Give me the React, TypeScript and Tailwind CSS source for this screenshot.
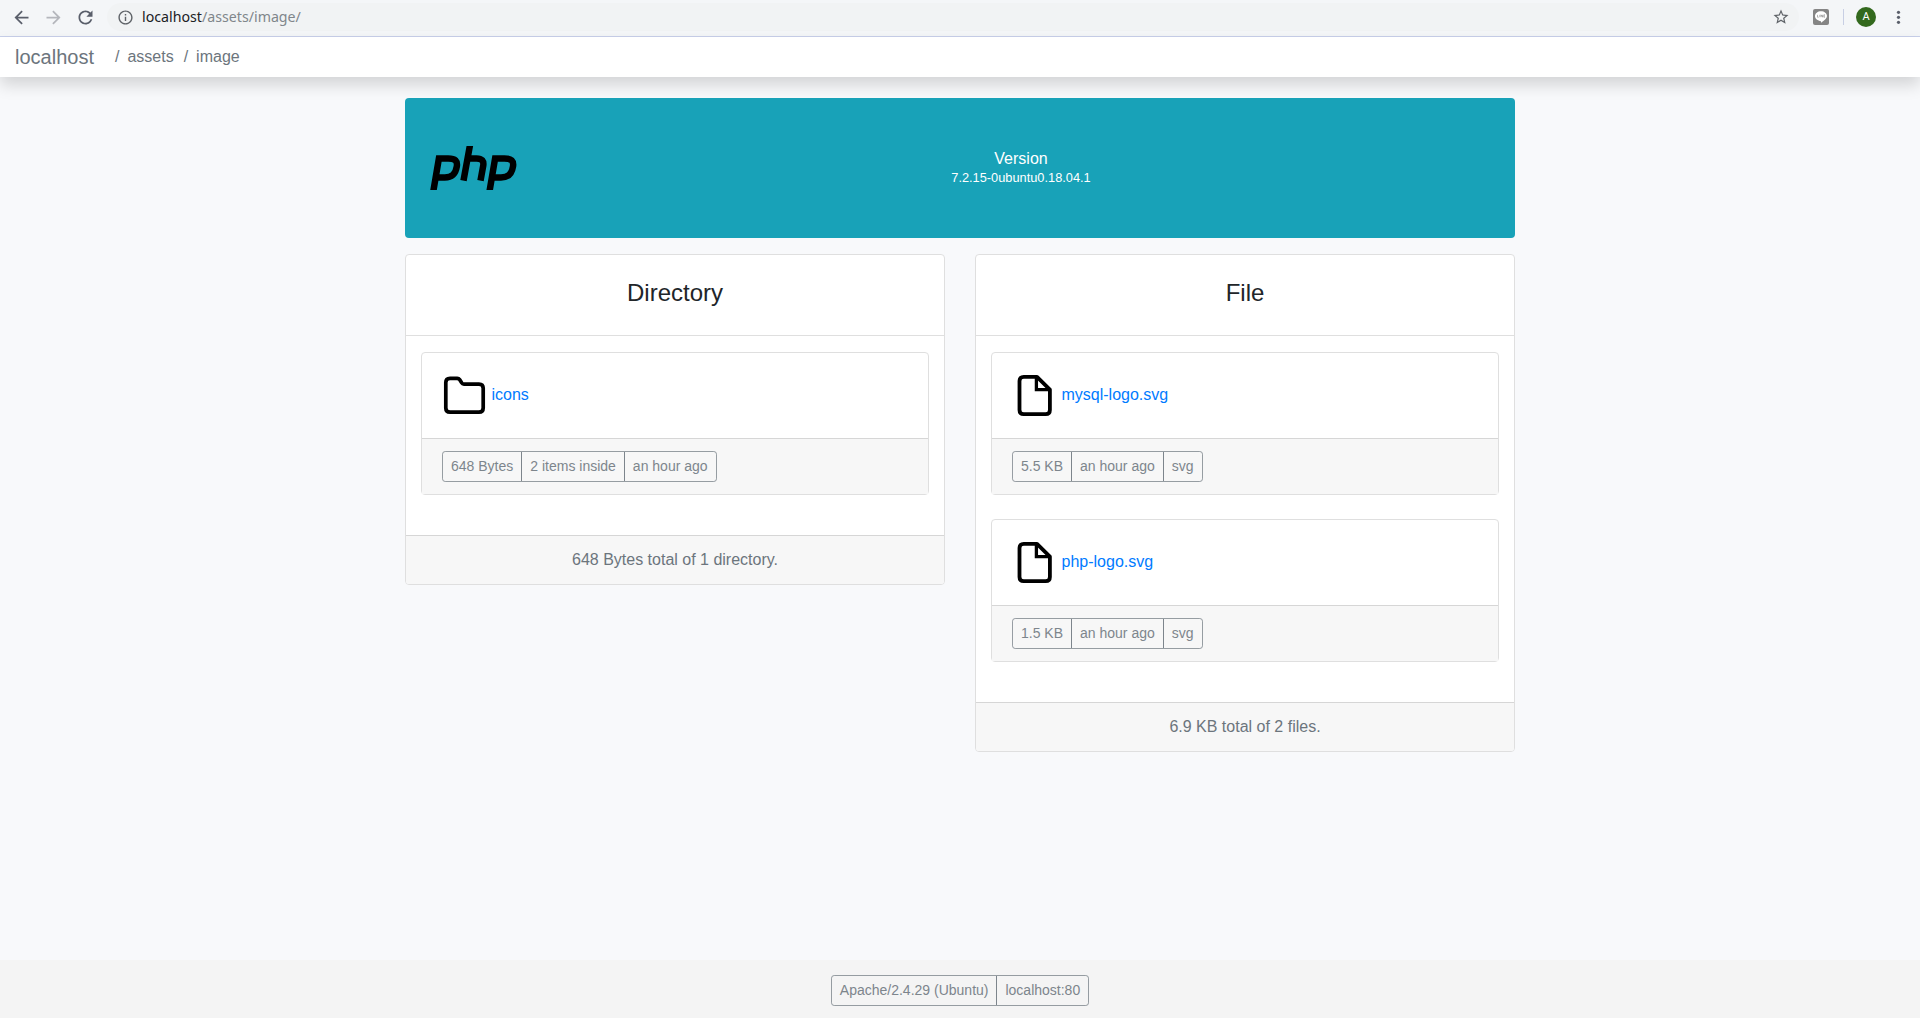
import React from "react";

function BrowserBar() {
  return (
    <div className="flex h-[37px] items-center border-b border-[#c8d0ea] bg-[#f4f6f8] pb-[2px]">
      <svg className="ml-[11px] h-[21px] w-[21px]" viewBox="0 0 24 24" fill="#5a5f6b">
        <path d="M20 11H7.83l5.59-5.59L12 4l-8 8 8 8 1.41-1.41L7.83 13H20v-2z" />
      </svg>
      <svg className="ml-[11px] h-[21px] w-[21px]" viewBox="0 0 24 24" fill="#b4b6bc">
        <path d="M12 4l-1.41 1.41L16.17 11H4v2h12.17l-5.58 5.59L12 20l8-8z" />
      </svg>
      <svg className="ml-[11px] h-[21px] w-[21px]" viewBox="0 0 24 24" fill="#5a5f6b">
        <path d="M17.65 6.35C16.2 4.9 14.21 4 12 4c-4.42 0-7.99 3.58-7.99 8s3.57 8 7.99 8c3.73 0 6.84-2.55 7.73-6h-2.08c-.82 2.33-3.04 4-5.65 4-3.31 0-6-2.69-6-6s2.69-6 6-6c1.66 0 3.14.69 4.22 1.78L13 11h7V4l-2.35 2.35z" />
      </svg>
      <div className="ml-[11px] flex h-7 w-[1692px] items-center rounded-full bg-[#f1f3f4] pl-[10px] pr-[9px]">
        <svg className="h-[17px] w-[17px]" viewBox="0 0 24 24" fill="#5f6368">
          <path d="M11 17h2v-6h-2v6zm1-15C6.48 2 2 6.48 2 12s4.48 10 10 10 10-4.48 10-10S17.52 2 12 2zm0 18c-4.41 0-8-3.59-8-8s3.59-8 8-8 8 3.59 8 8-3.59 8-8 8zM11 9h2V7h-2v2z" />
        </svg>
        <span className="ml-2 flex-1 font-['Noto_Sans',sans-serif] text-[14.2px] leading-5 text-[#80868b]">
          <span className="text-[#202124]">localhost</span>/assets/image/
        </span>
        <svg className="h-[18px] w-[18px]" viewBox="0 0 24 24" fill="#5f6368">
          <path d="M22 9.24l-7.19-.62L12 2 9.19 8.63 2 9.24l5.46 4.73L5.82 21 12 17.27 18.18 21l-1.63-7.03L22 9.24zM12 15.4l-3.76 2.27 1-4.28-3.32-2.88 4.38-.38L12 6.1l1.71 4.04 4.38.38-3.32 2.88 1 4.28L12 15.4z" />
        </svg>
      </div>
      <svg className="ml-[14px] h-4 w-4" viewBox="0 0 16 16">
        <rect width="16" height="16" rx="2" fill="#858585" />
        <path d="M8 2.2c3.3 0 6 2.1 6 4.8 0 1.1-.5 2.1-1.4 3.1-1.2 1.4-3.3 2.8-4.1 3.3-.7.3-.5-.5-.5-1.2C4.7 11.8 2 9.7 2 7c0-2.7 2.7-4.8 6-4.8z" fill="#fff" />
        <path d="M4.5 5.8v2.4h1.2M6.8 5.8v2.4M8 8.2V5.8l1.5 2.4V5.8M12 5.8h-1.2v2.4H12M10.8 7H12" fill="none" stroke="#858585" strokeWidth=".6" />
      </svg>
      <div className="ml-[14px] h-4 w-px bg-[#c8cfe4]" />
      <div className="ml-[12px] flex h-5 w-5 items-center justify-center rounded-full bg-[#33691e] font-[Roboto,sans-serif] text-[11px] text-white">A</div>
      <svg className="ml-[12px] h-5 w-5" viewBox="0 0 20 20" fill="#5a5f6b">
        <circle cx="10.5" cy="5.3" r="1.6" />
        <circle cx="10.5" cy="10.3" r="1.6" />
        <circle cx="10.5" cy="15.3" r="1.6" />
      </svg>
    </div>
  );
}

function FolderIcon() {
  return (
    <svg className="h-[45px] w-[45px]" viewBox="0 0 45 45" fill="none" stroke="#000" strokeWidth="3.7" strokeLinejoin="round">
      <path d="M3.8 9.6q0-4.2 4.2-4.2h7.3q1.5 0 2.3 1.2l1.9 3q.9 1.5 2.4 1.5H37q4.2 0 4.2 4.2V35q0 4.2-4.2 4.2H8q-4.2 0-4.2-4.2z" />
    </svg>
  );
}

function FileIcon() {
  return (
    <svg className="h-[45px] w-[45px]" viewBox="0 0 45 45" fill="none" stroke="#000" strokeWidth="3.8" strokeLinejoin="round">
      <path d="M11.7 3.8H25l12.9 12.9V37q0 4.2-4.2 4.2h-22q-4.2 0-4.2-4.2V8q0-4.2 4.2-4.2z" />
      <path d="M24.4 4v12.7h13" strokeWidth="3.3" strokeLinejoin="miter" />
    </svg>
  );
}

function Badges({ items }: { items: string[] }) {
  return (
    <div className="flex w-fit divide-x divide-[#6c757d] rounded-[3.2px] border border-[#6c757d]/80 text-[14px] leading-[21px] text-[#6c757d] opacity-[.87]">
      {items.map((t) => (
        <span key={t} className="px-2 py-1">{t}</span>
      ))}
    </div>
  );
}

function Entry({ icon, name, meta }: { icon: React.ReactNode; name: string; meta: string[] }) {
  return (
    <div className="mb-6 rounded-[4px] border border-[#dfdfdf]">
      <div className="flex h-[85px] items-center px-5">
        {icon}
        <a className="mb-[2px] ml-[4.5px] text-[16px] leading-6 text-[#007bff]">{name}</a>
      </div>
      <div className="border-t border-[#d6d6d6] bg-[#f7f7f7] px-5 py-3">
        <Badges items={meta} />
      </div>
    </div>
  );
}

function Panel({ title, total, children }: { title: string; total: string; children: React.ReactNode }) {
  return (
    <section className="rounded-[4px] border border-[#dfdfdf] bg-white">
      <h4 className="h-[81px] border-b border-[#dfdfdf] pt-6 text-center text-[24px] leading-[28.8px] text-[#212529]">{title}</h4>
      <div className="px-[15px] py-4">{children}</div>
      <div className="rounded-b-[3px] border-t border-[#d6d6d6] bg-[#f7f7f7] py-3 text-center text-[16px] leading-6 text-[#6c757d]">{total}</div>
    </section>
  );
}

export default function App() {
  return (
    <div className="flex h-[1018px] flex-col overflow-hidden bg-[#f8f9fb] font-['Liberation_Sans',Arial,sans-serif]">
      <BrowserBar />
      <nav className="flex h-10 items-center bg-white pl-[15px] text-[#6c757d] shadow-[0_8px_16px_rgba(0,0,0,0.15)]">
        <span className="text-[20px] leading-[30px]">localhost</span>
        <span className="ml-[21px] text-[16px]">/</span>
        <span className="ml-2 text-[16px]">assets</span>
        <span className="ml-[10px] text-[16px]">/</span>
        <span className="ml-2 text-[16px]">image</span>
      </nav>
      <main className="mx-auto mt-[21px] w-[1110px] flex-1">
        <header className="flex h-[140px] items-center rounded-[4px] bg-[#18a2b8] pl-[25px]">
          <svg className="h-[44px] w-[87px]" viewBox="0 0 87 44" fill="none" stroke="#000" strokeWidth="6.5">
            <path d="M3.2 46L8.9 12.4h9.3c7 0 9.500 2.500 8.600 8-1.300 8-5 11-12 11H7" />
            <path d="M40.200-2L33.500 34.700M38 12.400h8.500q8 0 6.700 7.500L50.500 34.700" />
            <path d="M59.400 46L65.100 12.400h9.300c7 0 9.500 2.500 8.600 8-1.300 8-5 11-12 11H63" />
          </svg>
          <div className="ml-[434px] w-[140px] text-center text-white">
            <div className="text-[16px] leading-[19px]">Version</div>
            <div className="whitespace-nowrap text-[12.8px] leading-[19px]">7.2.15-0ubuntu0.18.04.1</div>
          </div>
        </header>
        <div className="mt-4 grid grid-cols-2 items-start gap-[30px]">
          <Panel title="Directory" total="648 Bytes total of 1 directory.">
            <Entry icon={<FolderIcon />} name="icons" meta={["648 Bytes", "2 items inside", "an hour ago"]} />
          </Panel>
          <Panel title="File" total="6.9 KB total of 2 files.">
            <Entry icon={<FileIcon />} name="mysql-logo.svg" meta={["5.5 KB", "an hour ago", "svg"]} />
            <Entry icon={<FileIcon />} name="php-logo.svg" meta={["1.5 KB", "an hour ago", "svg"]} />
          </Panel>
        </div>
      </main>
      <footer className="flex h-[58px] items-start justify-center bg-[#f4f4f4] pt-[15px]">
        <Badges items={["Apache/2.4.29 (Ubuntu)", "localhost:80"]} />
      </footer>
    </div>
  );
}
